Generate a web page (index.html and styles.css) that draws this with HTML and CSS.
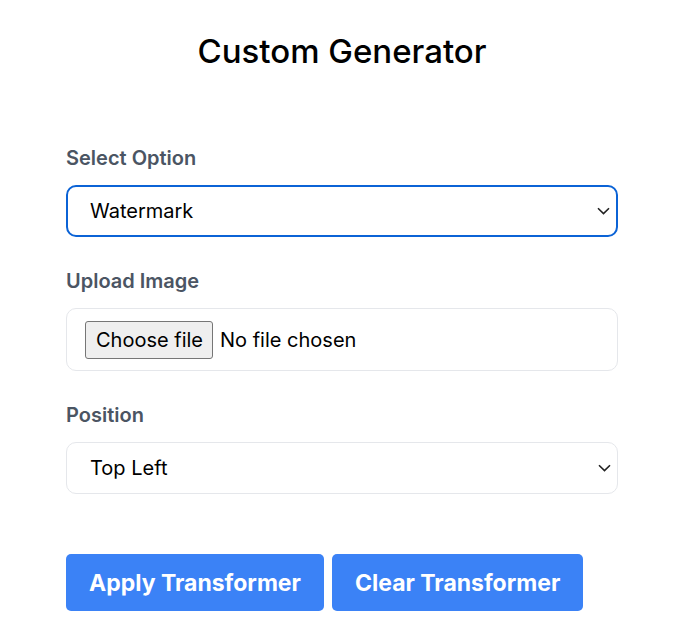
FILE: index.html
```html
<!DOCTYPE html>
<html lang="en">
<head>
<meta charset="utf-8">
<title>Custom Generator</title>
<link rel="stylesheet" href="styles.css">
</head>
<body>
<main class="page">
  <h1 class="title">Custom Generator</h1>
  <form class="form">
    <div class="field">
      <label class="label" for="opt">Select Option</label>
      <select id="opt" class="select is-focused">
        <option>Watermark</option>
      </select>
    </div>
    <div class="field">
      <label class="label" for="img">Upload Image</label>
      <div class="filebox">
        <span class="filebtn">Choose file</span>
        <span class="filetext">No file chosen</span>
      </div>
    </div>
    <div class="field">
      <label class="label" for="pos">Position</label>
      <select id="pos" class="select">
        <option>Top Left</option>
      </select>
    </div>
    <div class="actions">
      <button type="button" class="btn">Apply Transformer</button>
      <button type="button" class="btn">Clear Transformer</button>
    </div>
  </form>
</main>
</body>
</html>
```
FILE: styles.css
```css
* { box-sizing: border-box; }
html, body { margin: 0; padding: 0; background: #ffffff; }
body {
  font-family: Inter, "Liberation Sans", Arial, sans-serif;
  color: #000000;
}
.page {
  padding: 29px 68px 0 66px;
}
.title {
  margin: 0;
  text-align: center;
  font-size: 33px;
  line-height: 44px;
  font-weight: 500;
  color: #000;
}
.form {
  display: flex;
  flex-direction: column;
  margin-top: 71px;
}
.field {
  display: flex;
  flex-direction: column;
  gap: 13px;
  margin-bottom: 30px;
}
.label {
  font-size: 20px;
  line-height: 28px;
  font-weight: 600;
  color: #4b5563;
}
.select {
  appearance: none;
  -webkit-appearance: none;
  width: 100%;
  height: 52px;
  padding: 0 40px 0 23px;
  font-family: inherit;
  font-size: 20px;
  color: #000;
  background-color: #fff;
  border: 1px solid #e5e7eb;
  border-radius: 10px;
  outline: none;
  background-image: url("data:image/svg+xml;utf8,<svg xmlns='http://www.w3.org/2000/svg' width='13' height='8' viewBox='0 0 13 8'><path d='M1 1.2 L6.5 6.6 L12 1.2' fill='none' stroke='%23222' stroke-width='1.6'/></svg>");
  background-repeat: no-repeat;
  background-position: right 6px center;
}
.select.is-focused {
  border: 2px solid #0b63d6;
  padding-left: 22px;
}
.filebox {
  display: flex;
  align-items: center;
  gap: 7px;
  height: 63px;
  padding: 0 18px;
  border: 1px solid #e5e7eb;
  border-radius: 10px;
  font-size: 20px;
}
.filebtn {
  display: flex;
  align-items: center;
  height: 38px;
  padding: 0 9px 0 10px;
  background: #efefef;
  border: 1px solid #767676;
  border-radius: 3px;
  color: #000;
}
.filetext { color: #000; }
.actions {
  display: flex;
  gap: 8px;
  margin-top: 30px;
}
.btn {
  height: 57px;
  padding: 0 23px;
  border: 0;
  border-radius: 5px;
  background: #3b82f6;
  color: #fff;
  font-family: inherit;
  font-size: 23px;
  font-weight: 700;
}
```
